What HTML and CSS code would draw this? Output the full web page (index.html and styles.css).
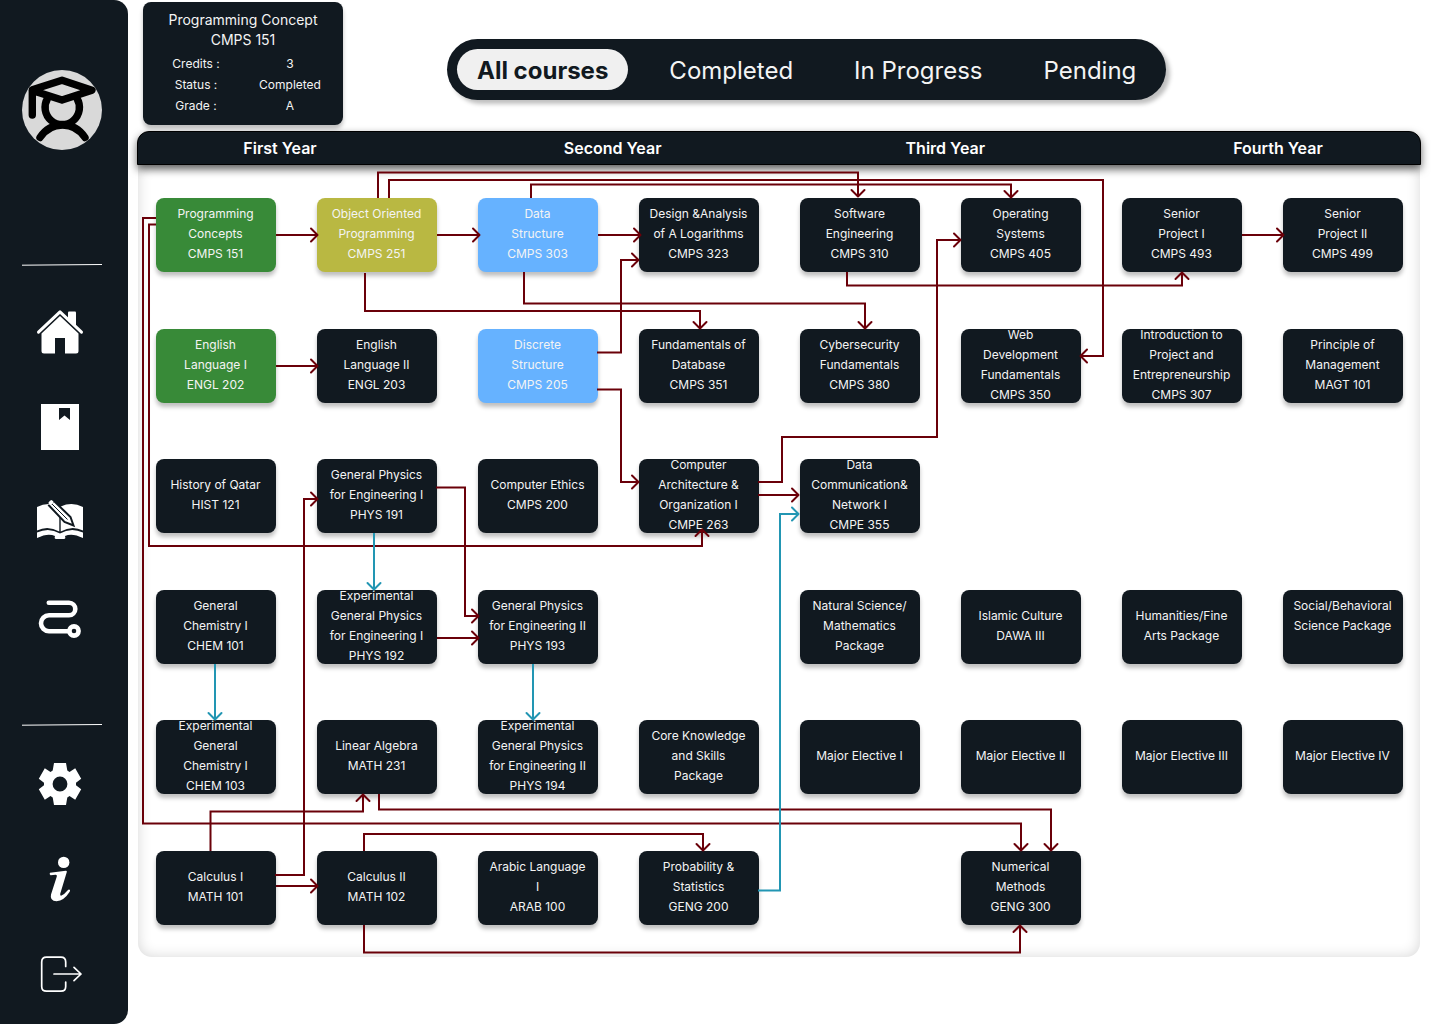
FILE: index.html
```html
<!DOCTYPE html>
<html lang="en">
<head>
<meta charset="utf-8">
<meta name="viewport" content="width=device-width, initial-scale=1">
<title>Study plan</title>
<link rel="stylesheet" href="styles.css">
</head>
<body>
<div class="shell">
  <aside class="sidebar">
    <svg class="avatar" viewBox="0 0 80 80" role="img" aria-label="Student">
      <circle cx="40" cy="40" r="40" fill="#d9d9d9"/>
      <g fill="none" stroke="#000" stroke-width="7.4" stroke-linecap="round" stroke-linejoin="round">
        <path d="M10.300 45V19.700L40 10.200L70 20.200L40 30L10.300 20.500"/>
        <path d="M25.500 28.500A17.200 17.200 0 1 0 55 28.500"/>
        <path d="M18 67.500C23 60 31 55 40.500 55S58 60 63 67.500"/>
      </g>
    </svg>
    <svg class="divider" viewBox="0 0 80 2" aria-hidden="true"><path d="M0 1.200L80 .5" stroke="#fff" fill="none"/></svg>
    <nav class="nav" aria-label="Main">
      <a href="#home" aria-label="Home">
        <svg class="icon" viewBox="0 0 48 48"><path d="M32 4.500q0-1 1-1h6q1 0 1 1V19l-8-7.500z"/><path d="M2.500 24.200L24 3.800L45.500 24.200" class="roof"/><path d="M5.500 25.500L24 8L42.500 25.500V43q0 2.500-2.500 2.500H29V30H19v15.500H8q-2.500 0-2.500-2.500z"/></svg>
      </a>
      <a href="#catalog" aria-label="Catalog">
        <svg class="icon" viewBox="0 0 48 48"><path fill-rule="evenodd" d="M5 1h38v46H5zM23 5v12l5.500-4.500L34 17V5z"/></svg>
      </a>
      <a href="#study" aria-label="Study">
        <svg class="icon" viewBox="0 0 48 48">
          <path d="M1 9Q12 3.500 23.300 8.500V33.500Q12 27 1 32.500z"/><path d="M47 9Q36 3.500 24.700 8.500V33.500Q36 27 47 32.500z"/>
          <path d="M1 34.500Q13 29 24 35.500Q35 29 47 34.500V40Q36 34.500 29 38Q30 41 28 41H20Q18 41 19 38Q12 34.500 1 40z"/>
          <g class="pencil"><path d="M13 7.500L18 3L34.500 19L37.500 27.500L28.500 24Z" class="pencil-body"/><path d="M15.500 5.500L31.500 21.500"/></g>
          <path d="M12.500 4.500Q14 2 15.500 2Q18 3 17.500 5L14.500 7.500Q12 6.500 12.500 4.500z"/>
        </svg>
      </a>
      <a href="#route" aria-label="Path">
        <svg class="icon" viewBox="0 0 48 48"><g class="route"><path d="M12.800 9.700H33a6.300 6.300 0 0 1 0 12.600H13a8 8 0 0 0 0 16H32"/><circle cx="38" cy="38" r="4.600"/></g></svg>
      </a>
    </nav>
    <svg class="divider divider--low" viewBox="0 0 80 2" aria-hidden="true"><path d="M0 1.200L80 .5" stroke="#fff" fill="none"/></svg>
    <nav class="nav" aria-label="Account">
      <a href="#settings" aria-label="Settings">
        <svg class="icon" viewBox="-24 -24 48 48"><path fill-rule="evenodd" d="M-6-21H6L7.300-13.400L9.500-12.100L15.200-15.700L21.200-5.300L16-1.300V1.300L21.200 5.300L15.200 15.700L9.500 12.100L7.300 13.400L6 21H-6L-7.300 13.400L-9.500 12.100L-15.200 15.700L-21.200 5.300L-16 1.300V-1.300L-21.200-5.300L-15.200-15.700L-9.500-12.100L-7.300-13.400ZM0-7.400A7.400 7.400 0 1 0 0 7.400A7.400 7.400 0 1 0 0-7.400Z"/></svg>
      </a>
      <a href="#about" aria-label="About">
        <svg class="icon" viewBox="0 0 48 48"><circle cx="27.700" cy="7.400" r="5.700"/><path d="M14 17.700L29.800 15.700Q31.200 15.700 30.800 17L24.300 38.500Q23.800 41.200 25.500 40.500Q28.300 39.300 31.500 35.400Q33 33.800 34 35Q34.300 36 33.500 37Q28 45.800 20.500 46.200Q13.500 46 15 39.500L20.800 21.500Q21.300 19.600 19.600 19.700L14.500 20.300Q13 19 14 17.700z"/></svg>
      </a>
      <a href="#logout" aria-label="Log out">
        <svg class="icon" viewBox="0 0 48 48"><g class="exit"><path d="M29.700 16.500V12q0-4.800-4.800-4.800H10.500Q5.700 7.200 5.700 12V36.500Q5.700 41.200 10.500 41.200H24.900Q29.700 41.200 29.700 36.500V32"/><path d="M18 24H45M38 17.300L45 24L38 30.700"/></g></svg>
      </a>
    </nav>
  </aside>

  <main class="main">
    <header class="top">
      <section class="details">
        <h1 class="details-title">Programming Concept<br>CMPS 151</h1>
        <dl class="details-list">
          <dt>Credits :</dt><dd>3</dd>
          <dt>Status :</dt><dd>Completed</dd>
          <dt>Grade :</dt><dd>A</dd>
        </dl>
      </section>
      <div class="tabs">
        <button type="button" class="tab tab--active" aria-pressed="true">All courses</button>
        <button type="button" class="tab" aria-pressed="false">Completed</button>
        <button type="button" class="tab" aria-pressed="false">In Progress</button>
        <button type="button" class="tab" aria-pressed="false">Pending</button>
      </div>
    </header>

    <section class="plan">
      <div class="years">
        <h2>First Year</h2><h2>Second Year</h2><h2>Third Year</h2><h2>Fourth Year</h2>
      </div>
      <div class="canvas">
        <ul class="courses">
          <li class="course course--completed">Programming<br>Concepts<br>CMPS 151</li>
          <li class="course course--progress">Object Oriented<br>Programming<br>CMPS 251</li>
          <li class="course course--pending">Data<br>Structure<br>CMPS 303</li>
          <li class="course">Design &amp;Analysis<br>of A Logarithms<br>CMPS 323</li>
          <li class="course">Software<br>Engineering<br>CMPS 310</li>
          <li class="course">Operating<br>Systems<br>CMPS 405</li>
          <li class="course">Senior<br>Project I<br>CMPS 493</li>
          <li class="course">Senior<br>Project II<br>CMPS 499</li>

          <li class="course course--completed">English<br>Language I<br>ENGL 202</li>
          <li class="course">English<br>Language II<br>ENGL 203</li>
          <li class="course course--pending">Discrete<br>Structure<br>CMPS 205</li>
          <li class="course">Fundamentals of<br>Database<br>CMPS 351</li>
          <li class="course">Cybersecurity<br>Fundamentals<br>CMPS 380</li>
          <li class="course">Web<br>Development<br>Fundamentals<br>CMPS 350</li>
          <li class="course">Introduction to<br>Project and<br>Entrepreneurship<br>CMPS 307</li>
          <li class="course">Principle of<br>Management<br>MAGT 101</li>

          <li class="course">History of Qatar<br>HIST 121</li>
          <li class="course">General Physics<br>for Engineering I<br>PHYS 191</li>
          <li class="course">Computer Ethics<br>CMPS 200</li>
          <li class="course">Computer<br>Architecture &amp;<br>Organization I<br>CMPE 263</li>
          <li class="course">Data<br>Communication&amp;<br>Network I<br>CMPE 355</li>

          <li class="course col-1">General<br>Chemistry I<br>CHEM 101</li>
          <li class="course">Experimental<br>General Physics<br>for Engineering I<br>PHYS 192</li>
          <li class="course">General Physics<br>for Engineering II<br>PHYS 193</li>
          <li class="course col-5">Natural Science/<br>Mathematics<br>Package</li>
          <li class="course">Islamic Culture<br>DAWA III</li>
          <li class="course">Humanities/Fine<br>Arts Package</li>
          <li class="course course--raised">Social/Behavioral<br>Science Package</li>

          <li class="course">Experimental<br>General<br>Chemistry I<br>CHEM 103</li>
          <li class="course">Linear Algebra<br>MATH 231</li>
          <li class="course">Experimental<br>General Physics<br>for Engineering II<br>PHYS 194</li>
          <li class="course">Core Knowledge<br>and Skills<br>Package</li>
          <li class="course">Major Elective I</li>
          <li class="course">Major Elective II</li>
          <li class="course">Major Elective III</li>
          <li class="course">Major Elective IV</li>

          <li class="course">Calculus I<br>MATH 101</li>
          <li class="course">Calculus II<br>MATH 102</li>
          <li class="course">Arabic Language<br>I<br>ARAB 100</li>
          <li class="course">Probability &amp;<br>Statistics<br>GENG 200</li>
          <li class="course col-6">Numerical<br>Methods<br>GENG 300</li>
        </ul>
        <svg class="links" viewBox="138 165 1282 792" preserveAspectRatio="none" aria-hidden="true">
          <defs>
            <marker id="head-pre" class="head" markerUnits="userSpaceOnUse" markerWidth="12" markerHeight="18" refX="9" refY="9" orient="auto"><path d="M2 2.500L8.500 9L2 15.500" stroke="#6a0009"/></marker>
            <marker id="head-co" class="head" markerUnits="userSpaceOnUse" markerWidth="12" markerHeight="18" refX="9" refY="9" orient="auto"><path d="M2 2.500L8.500 9L2 15.500" stroke="#2296b3"/></marker>
          </defs>
          <!-- Prerequisites -->
          <g class="pre">
            <path d="M378 198V172.500H858V197"/>
            <path d="M389 198V180H1103V356H1080"/>
            <path d="M531 198V184.500H1011V198"/>
            <path d="M156 218H143V823.500H1021V851"/>
            <path d="M156 224.500H149V546H702V529"/>
            <path d="M276 235H318"/>
            <path d="M437 235H480"/>
            <path d="M598 235H641"/>
            <path d="M597 352.500H621V260H639"/>
            <path d="M597 389.500H621V482H639"/>
            <path d="M365 273V311H700V329"/>
            <path d="M524 272V303.500H865V329"/>
            <path d="M847 272V285.500H1182V272"/>
            <path d="M1242 235H1284"/>
            <path d="M276 366H318"/>
            <path d="M758 482H782V437H937V240H961"/>
            <path d="M758 495H799"/>
            <path d="M436 487.500H465V616H479"/>
            <path d="M437 638H479"/>
            <path d="M210.500 851V811.500H363V794"/>
            <path d="M379 794V809.500H1051V851"/>
            <path d="M275 875H304V499H318"/>
            <path d="M276 886H318"/>
            <path d="M364 851V834H703V851"/>
            <path d="M364 925V952.500H1020V925"/>
          </g>
          <!-- Corequisites -->
          <g class="co">
            <path d="M758 890.500H780V514H799"/>
            <path d="M374 533V590"/>
            <path d="M215 664V720"/>
            <path d="M533 664V720"/>
          </g>
        </svg>
      </div>
    </section>
  </main>
</div>
</body>
</html>
```
FILE: styles.css
```css
:root {
  --ink: #111920;
  --pre: #6a0009;
  --co: #2296b3;
}

* { box-sizing: border-box; }

body {
  margin: 0;
  background: #fff;
  color: #f4f4f4;
  font: 400 12px/20px Inter, "Liberation Sans", sans-serif;
}

h1, h2, dl, dd, ul { margin: 0; padding: 0; }

.shell {
  display: flex;
  min-height: 100vh;
}

/* Sidebar */
.sidebar {
  flex: none;
  width: 128px;
  padding: 70px 22px 0;
  background: var(--ink);
  border-radius: 0 14px 14px 0;
}
.avatar { display: block; width: 80px; height: 80px; }
.divider {
  display: block;
  width: 80px;
  height: 2px;
  margin: 114px 0 42px;
}
.divider--low { margin: 83px 0 34px; }
.nav {
  display: flex;
  flex-direction: column;
  align-items: center;
  gap: 47px;
  width: 76px;
}
.nav a { display: block; }
.icon {
  display: block;
  width: 48px;
  height: 48px;
  fill: #fff;
}
.roof, .route, .exit {
  fill: none;
  stroke: #fff;
  stroke-linecap: round;
  stroke-linejoin: round;
}
.roof { stroke-width: 3; }
.route { stroke-width: 4.6; }
.exit { stroke-width: 1.7; }
.pencil { fill: none; stroke: var(--ink); stroke-width: 1; }
.pencil-body { fill: #fff; stroke-width: 2; }

/* Top row */
.main {
  flex: 1;
  min-width: 0;
  padding: 2px 19px 40px 9px;
}
.top {
  display: flex;
  align-items: flex-start;
  gap: 104px;
  padding: 0 6px 6px;
}
.details {
  flex: none;
  width: 200px;
  padding: 8px 6px 9px;
  background: var(--ink);
  border-radius: 8px;
  box-shadow: 0 4px 4px rgba(0, 0, 0, .25);
  text-align: center;
}
.details-title { font-size: 14px; font-weight: 400; line-height: 20px; }
.details-list {
  display: grid;
  grid-template-columns: 1fr 1fr;
  margin-top: 3px;
  line-height: 21px;
}
.tabs {
  display: flex;
  gap: 21px;
  margin-top: 37px;
  padding: 10px;
  background: var(--ink);
  border-radius: 31px;
  box-shadow: 4px 4px 4px rgba(0, 0, 0, .25);
}
.tab {
  padding: 2px 20px 0;
  border: 0;
  border-radius: 21px;
  background: none;
  color: inherit;
  font: inherit;
  font-size: 24px;
  line-height: 39px;
  white-space: nowrap;
}
.tab--active { background: #f0f0f0; color: var(--ink); font-weight: 700; }

/* Plan */
.years {
  position: relative;
  display: flex;
  justify-content: space-between;
  padding: 0 82px;
  border: 1px solid #000;
  border-radius: 12px 12px 0 0;
  background: var(--ink);
  color: #fff;
  box-shadow: 0 4px 8px rgba(0, 0, 0, .6);
}
.years h2 {
  width: 120px;
  font-size: 16px;
  font-weight: 600;
  line-height: 32px;
  text-align: center;
  white-space: nowrap;
}
.canvas {
  position: relative;
  margin: 0 1px;
  padding: 33px 17px 32px 18px;
  border-radius: 0 0 14px 14px;
  box-shadow: inset 0 0 14px rgba(0, 0, 0, .16);
}
.courses {
  display: grid;
  grid-template-columns: repeat(8, minmax(0, 1fr));
  grid-auto-rows: 74px;
  align-content: space-between;
  column-gap: 41px;
  min-height: 727px;
  list-style: none;
}
.course {
  display: flex;
  flex-direction: column;
  justify-content: center;
  padding: 0 1px 2px 0;
  background: var(--ink);
  border-radius: 8px;
  box-shadow: 0 4px 4px rgba(0, 0, 0, .25);
  text-align: center;
  white-space: nowrap;
}
.course--completed { background: #388a38; }
.course--progress { background: #b9b842; }
.course--pending { background: #66b2ff; }
.course--raised { padding-bottom: 22px; }
.col-1 { grid-column: 1; }
.col-5 { grid-column: 5; }
.col-6 { grid-column: 6; }

/* Connectors drawn over the course cards */
.links {
  position: absolute;
  inset: 0;
  width: 100%;
  height: 100%;
  pointer-events: none;
}
.links path { fill: none; stroke-width: 2; }
.head path { stroke-linecap: round; stroke-linejoin: round; }
.pre path { stroke: var(--pre); marker-end: url(#head-pre); }
.co path { stroke: var(--co); marker-end: url(#head-co); }
```
